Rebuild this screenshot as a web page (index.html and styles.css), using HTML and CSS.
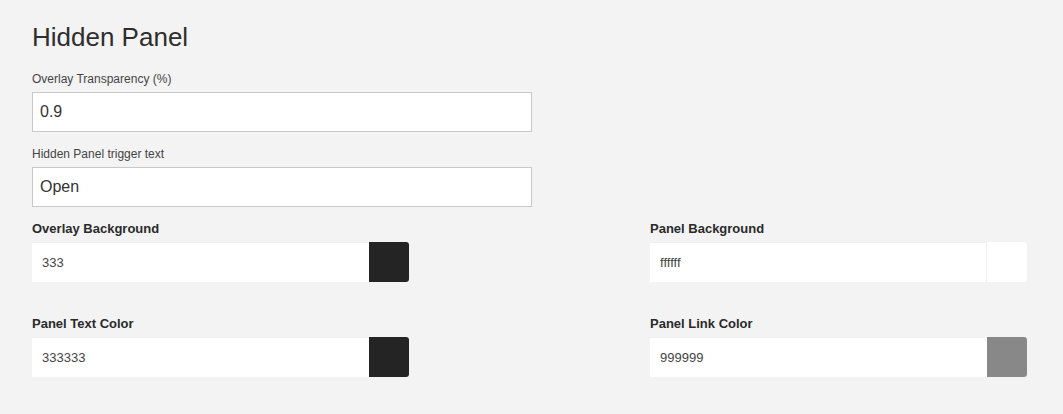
FILE: index.html
```html
<!DOCTYPE html>
<html>
<head>
<meta charset="utf-8">
<link rel="stylesheet" href="styles.css">
</head>
<body>
<div class="page">
  <h1 class="title">Hidden Panel</h1>
  <div class="field">
    <label class="label">Overlay Transparency (%)</label>
    <div class="text-input">0.9</div>
  </div>
  <div class="field">
    <label class="label">Hidden Panel trigger text</label>
    <div class="text-input">Open</div>
  </div>
  <div class="colors">
    <div class="color-field">
      <div class="blabel">Overlay Background</div>
      <div class="color-input"><span class="value">333</span><span class="swatch dark"></span></div>
    </div>
    <div class="color-field">
      <div class="blabel">Panel Background</div>
      <div class="color-input"><span class="value">ffffff</span><span class="swatch white"></span></div>
    </div>
    <div class="color-field">
      <div class="blabel">Panel Text Color</div>
      <div class="color-input"><span class="value">333333</span><span class="swatch dark"></span></div>
    </div>
    <div class="color-field">
      <div class="blabel">Panel Link Color</div>
      <div class="color-input"><span class="value">999999</span><span class="swatch grey"></span></div>
    </div>
  </div>
</div>
</body>
</html>
```

FILE: styles.css
```css
html, body {
  margin: 0;
  padding: 0;
  background: #f3f3f3;
}
body {
  font-family: "Liberation Sans", Arial, sans-serif;
  color: #333;
}
.page {
  padding: 22px 32px 0 32px;
}
.title {
  margin: 0;
  font-size: 26px;
  font-weight: normal;
  line-height: 30px;
  color: #2e2e2e;
}
.field {
  display: flex;
  flex-direction: column;
}
.label {
  font-size: 12px;
  line-height: 14px;
  color: #444;
  margin-top: 20px;
  margin-bottom: 6px;
}
.field + .field .label {
  margin-top: 15px;
}
.text-input {
  box-sizing: border-box;
  width: 500px;
  height: 40px;
  border: 1px solid #c9c9c9;
  background: #fff;
  font-size: 16px;
  line-height: 38px;
  padding-left: 7px;
  color: #333;
}
.colors {
  display: grid;
  grid-template-columns: 618px 377px;
  row-gap: 34px;
  margin-top: 14px;
}
.blabel {
  font-size: 13px;
  font-weight: bold;
  line-height: 16px;
  color: #2a2a2a;
  margin-bottom: 5px;
}
.color-input {
  display: flex;
  width: 377px;
  height: 40px;
  background: #fff;
  border-top: 1px solid #eeeeee;
  box-sizing: border-box;
  border-radius: 0 3px 3px 0;
}
.value {
  flex: 1;
  font-size: 13px;
  line-height: 39px;
  padding-left: 10px;
  color: #444;
}
.swatch {
  width: 40px;
  margin-top: -1px;
  border-radius: 0 3px 3px 0;
}
.dark { background: #242424; }
.grey { background: #888888; }
.white { background: #ffffff; border-left: 1px solid #f0f0f0; }
```
